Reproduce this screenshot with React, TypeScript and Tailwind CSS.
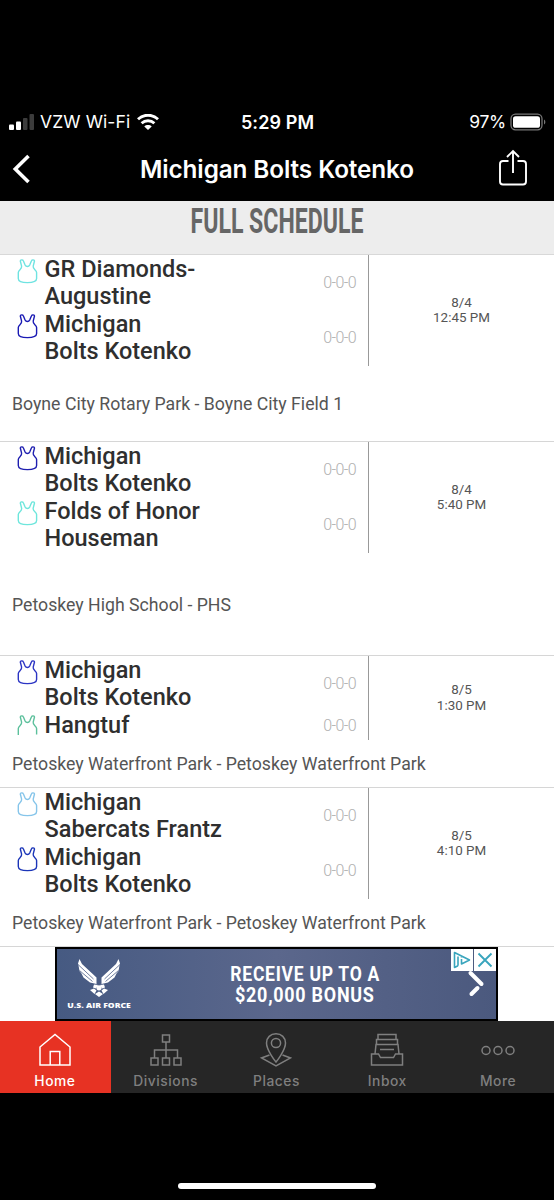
import React from 'react';

interface Team {
  lines: string[];
  color: string;
  record: string;
  cropped?: boolean;
}

interface Game {
  teams: Team[];
  date: string;
  time: string;
  venue: string;
  height: string;
  venuePad: string;
}

const games: Game[] = [
  {
    teams: [
      { lines: ['GR Diamonds-', 'Augustine'], color: '#6fe3e1', record: '0-0-0' },
      { lines: ['Michigan', 'Bolts Kotenko'], color: '#1a1ab4', record: '0-0-0' },
    ],
    date: '8/4',
    time: '12:45 PM',
    venue: 'Boyne City Rotary Park - Boyne City Field 1',
    height: 'h-[187px]',
    venuePad: 'pt-[26px]',
  },
  {
    teams: [
      { lines: ['Michigan', 'Bolts Kotenko'], color: '#1f1fb0', record: '0-0-0' },
      { lines: ['Folds of Honor', 'Houseman'], color: '#6ee6dc', record: '0-0-0' },
    ],
    date: '8/4',
    time: '5:40 PM',
    venue: 'Petoskey High School - PHS',
    height: 'h-[214px]',
    venuePad: 'pt-10',
  },
  {
    teams: [
      { lines: ['Michigan', 'Bolts Kotenko'], color: '#2c35c4', record: '0-0-0' },
      { lines: ['Hangtuf'], color: '#5cc09c', record: '0-0-0', cropped: true },
    ],
    date: '8/5',
    time: '1:30 PM',
    venue: 'Petoskey Waterfront Park - Petoskey Waterfront Park',
    height: 'h-[132px]',
    venuePad: 'pt-3',
  },
  {
    teams: [
      { lines: ['Michigan', 'Sabercats Frantz'], color: '#86c5ea', record: '0-0-0' },
      { lines: ['Michigan', 'Bolts Kotenko'], color: '#1b35b8', record: '0-0-0' },
    ],
    date: '8/5',
    time: '4:10 PM',
    venue: 'Petoskey Waterfront Park - Petoskey Waterfront Park',
    height: 'h-[159px]',
    venuePad: 'pt-3',
  },
];

const Pinnie = ({ color, cropped }: { color: string; cropped?: boolean }) => (
  <svg width="21" height="25" viewBox="0 0 21 25" fill="none" stroke={color} strokeWidth="1.4" strokeLinejoin="round">
    {cropped ? (
      <path d="M1.300 20V13.500C1.300 10.800 5.200 10.200 4.600 7.200L3.300 2C3.300 .8 5.800 .4 6.300 1.800L8 5.800C9.200 8 11.600 8 12.800 5.800L14.500 1.800C15 .4 17.500 .8 17.500 2L16.200 7.200C15.600 10.200 19.600 10.800 19.600 13.500V19.500" />
    ) : (
      <path d="M1.300 13.500C1.300 10.800 5.200 10.200 4.600 7.200L3.300 2C3.300 .8 5.800 .4 6.300 1.800L8 5.800C9.200 8 11.600 8 12.800 5.800L14.500 1.800C15 .4 17.500 .8 17.500 2L16.200 7.200C15.600 10.200 19.600 10.800 19.600 13.500V19.500C19.600 22.200 16.500 23.600 10.400 23.600S1.300 22.200 1.300 19.500Z" />
    )}
  </svg>
);

const StatusBar = () => (
  <div className="flex h-6 items-center justify-between pl-[9px] pr-2 font-['Inter'] text-white">
    <div className="flex w-[180px] items-center">
      <svg width="25" height="16" viewBox="0 0 25 16">
        <rect x="0" y="10.5" width="5" height="5.5" rx="1" fill="#fff" />
        <rect x="7" y="7.5" width="5" height="8.5" rx="1" fill="#fff" />
        <rect x="14" y="4" width="4.5" height="12" rx="1" fill="#3c3c3c" />
        <rect x="20.5" y="0" width="4.5" height="16" rx="1" fill="#3c3c3c" />
      </svg>
      <span className="ml-1.5 whitespace-nowrap text-[17.5px] tracking-[0.1px]">VZW Wi-Fi</span>
      <svg className="ml-[7px]" width="22" height="16" viewBox="0 0 22 16" fill="none" stroke="#fff" strokeWidth="2.9">
        <path d="M1 5.200C6.600-.1 15.400-.1 21 5.200" />
        <path d="M4.600 9.200C8.200 5.900 13.800 5.900 17.400 9.200" />
        <path d="M11 16L7.300 12.400C9.200 10.500 12.800 10.500 14.700 12.400Z" fill="#fff" stroke="none" />
      </svg>
    </div>
    <span className="text-[18px] font-semibold tracking-[0.1px]">5:29 PM</span>
    <div className="flex w-[180px] items-center justify-end">
      <span className="text-[17.5px] tracking-[-0.3px]">97%</span>
      <svg className="ml-1" width="36" height="18" viewBox="0 0 36 18">
        <rect x="1" y="1.200" width="31" height="15.600" rx="4.500" fill="none" stroke="#777" strokeWidth="1.300" />
        <rect x="3" y="3.200" width="27" height="11.600" rx="2.600" fill="#fff" />
        <path d="M34 6.500C35.800 7.200 35.800 10.800 34 11.500Z" fill="#777" />
      </svg>
    </div>
  </div>
);

const NavBar = () => (
  <div className="flex h-[67px] items-center justify-between pl-3 pr-[26px] pt-[3px] text-white">
    <svg width="44" height="30" viewBox="0 0 44 30" fill="none" stroke="#fff" strokeWidth="3.600">
      <path d="M16.500 2L3.300 15L16.500 28" />
    </svg>
    <h1 className="whitespace-nowrap font-['Inter'] text-[24.3px] font-semibold tracking-[-0.1px]">Michigan Bolts Kotenko</h1>
    <svg className="mb-0.5" width="30" height="38" viewBox="0 0 30 38" fill="none" stroke="#fff" strokeWidth="1.900">
      <path d="M10.500 12H5C3 12 2 13 2 15V32.500C2 34.500 3 35.500 5 35.500H25C27 35.500 28 34.500 28 32.500V15C28 13 27 12 25 12H19.500" />
      <path d="M15 24V2M9 8L15 2L21 8" />
    </svg>
  </div>
);

const GameRow = ({ game }: { game: Game }) => (
  <div className={`shrink-0 border-b border-[#d6d6d6] ${game.height}`}>
    <div className="flex">
      <div className="w-[369px] border-r-[1.5px] border-[#999] pt-[0.5px]">
        {game.teams.map((team, i) => (
          <div key={i} className="flex items-center pl-[16.5px] pr-3">
            <div className="mt-[3px] w-7 self-start">
              <Pinnie color={team.color} cropped={team.cropped} />
            </div>
            <div className="flex-1 whitespace-nowrap text-[23.5px] font-medium leading-[27.6px] text-[#2f2f2f]">
              {team.lines.map((line) => (
                <div key={line}>{line}</div>
              ))}
            </div>
            <span className="text-[16px] font-light tracking-[-0.6px] text-[#b0b0b0]">{team.record}</span>
          </div>
        ))}
      </div>
      <div className="flex flex-1 flex-col items-center justify-center text-[13.4px] leading-[15.5px] text-[#555]">
        <span>{game.date}</span>
        <span>{game.time}</span>
      </div>
    </div>
    <div className={`whitespace-nowrap pl-3 text-[17.7px] leading-6 text-[#555] ${game.venuePad}`}>{game.venue}</div>
  </div>
);

const AdBanner = () => (
  <div className="flex h-[74px] shrink-0 justify-center pr-px">
    <div className="relative flex w-[443px] border-2 border-black bg-gradient-to-r from-[#465a82] via-[#5b678c] to-[#4b597e] text-white">
      <div className="flex w-[84px] flex-col items-center pt-2.5">
        <svg width="42" height="38" viewBox="0 0 42 38" fill="#fff">
          <path d="M1.500 0L4 5L18.500 18.500L18.500 25L12 23.500L5.500 18.500L3.500 14.500L1.500 12L.8 8L0 4.500Z" />
          <path d="M40.500 0L38 5L23.500 18.500L23.500 25L30 23.500L36.500 18.500L38.500 14.500L40.500 12L41.200 8L42 4.500Z" />
          <path d="M0 5.500L15.500 20M1.500 11.500L14.500 22.500M42 5.500L26.500 20M40.500 11.500L27.500 22.500" stroke="#4c5e86" strokeWidth="0.8" />
          <circle cx="21" cy="28.800" r="2.600" />
          <path d="M16 25.500L20 26L18 29.500L15 28.500ZM26 25.500L22 26L24 29.500L27 28.500ZM12 31L16 29.500L18.500 31.500L16.500 35ZM30 31L26 29.500L23.500 31.500L25.500 35ZM21 32.500L25 35L21 38L17 35Z" />
        </svg>
        <span className="mt-1 inline-block scale-x-[1.32] whitespace-nowrap font-['Open_Sans'] text-[6.5px] font-extrabold leading-[9px]">U.S. AIR FORCE</span>
      </div>
      <div className="flex w-[328px] flex-col items-center pt-[15px] text-[19.5px] font-bold leading-[21px]">
        <span className="inline-block scale-x-[0.9] whitespace-nowrap tracking-[0.8px]">RECEIVE UP TO A</span>
        <span className="inline-block scale-x-[0.92] whitespace-nowrap tracking-[0.8px]">$20,000 BONUS</span>
      </div>
      <svg className="absolute right-[11px] top-[21px]" width="18" height="28" viewBox="0 0 18 28" fill="none" stroke="#fff" strokeWidth="4" strokeLinecap="round">
        <path d="M3.500 3L14.500 14" />
        <path d="M10.500 18L4.500 24" />
      </svg>
      <div className="absolute right-0 top-0 flex gap-px">
        <div className="flex h-[22px] w-[22px] items-center justify-center bg-white">
          <svg width="18" height="18" viewBox="0 0 18 18" fill="none" stroke="#39a5bd" strokeWidth="1.600" strokeLinejoin="round">
            <path d="M5 14.800L1.500 16.500V1.500L16.500 9L8.500 13V8M8.500 5V6.400M5 5.500V14.800" />
          </svg>
        </div>
        <div className="flex h-[22px] w-[22px] items-center justify-center bg-white">
          <svg width="16" height="16" viewBox="0 0 16 16" fill="none" stroke="#39a5bd" strokeWidth="1.900">
            <path d="M1.500 1.500L14.500 14.500M14.500 1.500L1.500 14.500" />
          </svg>
        </div>
      </div>
    </div>
  </div>
);

const tabs = [
  {
    label: 'Home',
    icon: <path d="M2 14L17 1.500L32 14V32H2V14ZM12.200 32V18.500H21.800V32" />,
  },
  {
    label: 'Divisions',
    icon: (
      <path d="M13.500 2H20.500V9H13.500ZM2 25H9V32H2ZM13.500 25H20.500V32H13.500ZM25 25H32V32H25ZM17 9V25M5.500 25V17H28.500V25" />
    ),
  },
  {
    label: 'Places',
    icon: (
      <>
        <path d="M17 29C17 29 7.500 17.500 7.500 10C7.500 4.500 11.500.800 17 .800S26.500 4.500 26.500 10C26.500 17.500 17 29 17 29Z" />
        <circle cx="17" cy="10" r="4.600" />
        <path d="M10.500 22L2.500 25L17 33L31.500 25L23.500 22" />
      </>
    ),
  },
  {
    label: 'Inbox',
    icon: (
      <path d="M8 6.500V1.500H26V6.500M6.500 11.500V6.500H27.500V11.500M5 21L6 11.500H28L29 21M10 16.500H24M1.500 21H8.500L10.500 24.500H23.500L25.500 21H32.500V32H1.500Z" />
    ),
  },
  {
    label: 'More',
    icon: (
      <>
        <circle cx="5" cy="17.500" r="4" />
        <circle cx="17" cy="17.500" r="4" />
        <circle cx="29" cy="17.500" r="4" />
      </>
    ),
  },
];

const TabBar = () => (
  <div className="grid h-[72px] shrink-0 grid-cols-5 bg-[#262626]">
    {tabs.map((tab, i) => (
      <div
        key={tab.label}
        className={`flex flex-col items-center pr-px pt-3 ${i === 0 ? 'bg-[#e73223] text-white' : 'text-[#7f7f7f]'}`}
      >
        <svg width="34" height="34" viewBox="0 0 34 34" fill="none" stroke="currentColor" strokeWidth="1.500">
          {tab.icon}
        </svg>
        <span className="mt-1 font-['Inter'] text-[13.8px] font-medium leading-5 tracking-[0.55px]">{tab.label}</span>
      </div>
    ))}
  </div>
);

const App: React.FC = () => {
  return (
    <div className="flex h-[1200px] w-full flex-col overflow-hidden bg-black font-['Roboto',sans-serif]">
      {/* Header */}
      <div className="h-[201px] shrink-0 pt-[110px]">
        <StatusBar />
        <NavBar />
      </div>

      {/* Section title */}
      <div className="flex h-[54px] shrink-0 justify-center border-b border-[#d8d8d8] bg-[#ededed]">
        <h2 className="inline-block scale-x-[0.65] whitespace-nowrap text-[35.5px] font-bold leading-[40px] text-[#666]">FULL SCHEDULE</h2>
      </div>

      {/* Games */}
      <div className="flex shrink-0 flex-col bg-white">
        {games.map((game, i) => (
          <GameRow key={i} game={game} />
        ))}
        <AdBanner />
      </div>

      <TabBar />

      {/* Home indicator */}
      <div className="flex flex-1 items-end justify-center pb-[11px]">
        <div className="h-1.5 w-[198px] rounded-full bg-white" />
      </div>
    </div>
  );
};

export default App;
